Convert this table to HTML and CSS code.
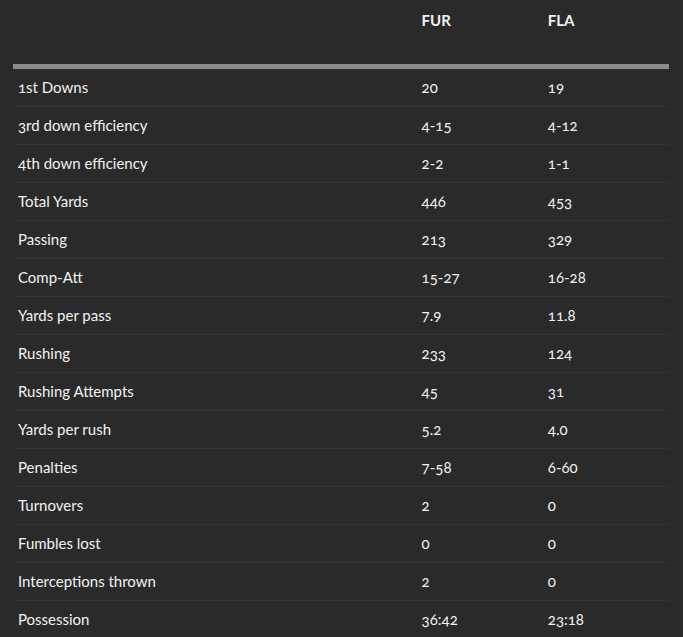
FILE: index.html
```html
<!DOCTYPE html>
<html>
<head>
<meta charset="utf-8">
<link rel="stylesheet" href="styles.css">
</head>
<body>
<table class="stats">
  <thead>
    <tr><th class="label"></th><th class="team">FUR</th><th class="team">FLA</th></tr>
  </thead>
  <tbody>
    <tr><td>1st Downs</td><td>20</td><td>19</td></tr>
    <tr><td>3rd down efficiency</td><td>4-15</td><td>4-12</td></tr>
    <tr><td>4th down efficiency</td><td>2-2</td><td>1-1</td></tr>
    <tr><td>Total Yards</td><td>446</td><td>453</td></tr>
    <tr><td>Passing</td><td>213</td><td>329</td></tr>
    <tr><td>Comp-Att</td><td>15-27</td><td>16-28</td></tr>
    <tr><td>Yards per pass</td><td>7.9</td><td>11.8</td></tr>
    <tr><td>Rushing</td><td>233</td><td>124</td></tr>
    <tr><td>Rushing Attempts</td><td>45</td><td>31</td></tr>
    <tr><td>Yards per rush</td><td>5.2</td><td>4.0</td></tr>
    <tr><td>Penalties</td><td>7-58</td><td>6-60</td></tr>
    <tr><td>Turnovers</td><td>2</td><td>0</td></tr>
    <tr><td>Fumbles lost</td><td>0</td><td>0</td></tr>
    <tr><td>Interceptions thrown</td><td>2</td><td>0</td></tr>
    <tr><td>Possession</td><td>36:42</td><td>23:18</td></tr>
  </tbody>
</table>
</body>
</html>
```
FILE: styles.css
```css
html, body {
  margin: 0;
  padding: 0;
  background: #2a2a2a;
}
body {
  padding: 0 14px 0 13px;
  font-family: Lato, "Open Sans", sans-serif;
  font-size: 15px;
  color: #f2f2f2;
  font-variant-numeric: oldstyle-nums;
}
.stats {
  width: 656px;
  border-collapse: collapse;
}
.stats th {
  text-align: left;
  font-weight: 700;
  padding: 10px 5px 34px;
  line-height: 20px;
  height: 20px;
  border-bottom: 5px solid #8c8c8c;
}
.stats th.label { width: 393px; }
.stats th.team { width: 116px; }
.stats td {
  padding: 0 5px 2px;
  height: 35px;
  line-height: 20px;
  vertical-align: middle;
  border-bottom: 1px solid #333333;
}
```
